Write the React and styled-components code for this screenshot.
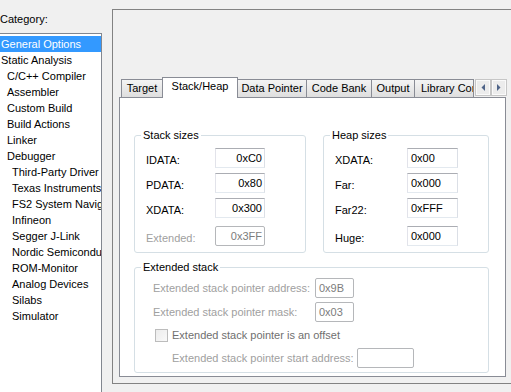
import React from 'react';
import styled, { createGlobalStyle } from 'styled-components';

const Global = createGlobalStyle`
  html, body { margin: 0; padding: 0; background: #f0f0f0; }
  body {
    font-family: "Liberation Sans", Arial, sans-serif;
    font-size: 11px;
    color: #000;
  }
  #root { width: 511px; height: 392px; overflow: hidden; }
`;

const Page = styled.div`
  display: flex;
  height: 392px;
  overflow: hidden;
`;

const Sidebar = styled.div`
  width: 102px;
  flex: none;
  display: flex;
  flex-direction: column;
  padding-top: 12px;
  box-sizing: border-box;
`;

const Caption = styled.div`
  line-height: 14px;
  height: 14px;
  margin-bottom: 7px;
`;

const List = styled.div`
  flex: 1;
  background: #fff;
  border: 1px solid #828790;
  border-bottom: none;
  margin-left: -1px;
  padding-top: 2px;
  overflow: hidden;
`;

const Item = styled.div`
  height: 16px;
  line-height: 16px;
  padding-left: ${p => [1, 7, 12][p.$level]}px;
  white-space: nowrap;
  overflow: hidden;
  background: ${p => (p.$selected ? '#3399ff' : 'transparent')};
  color: ${p => (p.$selected ? '#fff' : '#000')};
`;

const Main = styled.div`
  flex: 1;
  display: flex;
  padding: 9px 2px 8px 10px;
  box-sizing: border-box;
`;

const Frame = styled.div`
  flex: 1;
  border: 1px solid #828282;
  display: flex;
  flex-direction: column;
  justify-content: flex-end;
  padding: 0 5px 6px 6px;
`;

const Strip = styled.div`
  display: flex;
  height: 21px;
  margin-bottom: -1px;
  margin-right: -1px;
  position: relative;
  z-index: 1;
`;

const TabList = styled.div`
  flex: 1;
  display: flex;
  align-items: flex-end;
  overflow: hidden;
  padding-left: 2px;
  height: 21px;
`;

const Tab = styled.div`
  flex: none;
  box-sizing: border-box;
  width: ${p => p.$w}px;
  height: ${p => (p.$selected ? 21 : 18)}px;
  margin-left: ${p => (p.$first ? 0 : -1)}px;
  margin-bottom: ${p => (p.$selected ? 0 : 1)}px;
  border: 1px solid #898c95;
  border-bottom: none;
  background: ${p => (p.$selected ? '#fff' : 'linear-gradient(#f4f4f4, #e9e9e9 50%, #dedede)')};
  position: relative;
  z-index: ${p => (p.$selected ? 2 : 1)};
  display: flex;
  align-items: center;
  justify-content: ${p => (p.$clip ? 'flex-start' : 'center')};
  padding-left: ${p => (p.$clip ? 6 : 0)}px;
  padding-bottom: ${p => (p.$selected ? 3 : 0)}px;
  overflow: hidden;
  white-space: nowrap;
  line-height: 13px;
`;

const Scrollers = styled.div`
  display: flex;
  margin-top: 2px;
  height: 17px;
  margin-left: 1px;
`;

const ScrollBtn = styled.div`
  width: 16px;
  height: 17px;
  box-sizing: border-box;
  border: 1px solid #c6c6c6;
  box-shadow: inset 0 0 0 1px #fafafa;
  background: #ececec;
  display: flex;
  align-items: center;
  justify-content: center;
`;

const Panel = styled.div`
  background: #fff;
  border: 1px solid #898c95;
  padding: 37px 12px 3px 14px;
  display: grid;
  grid-template-columns: 172px 166px;
  column-gap: 17px;
  row-gap: 14px;
`;

const Group = styled.div`
  position: relative;
  border: 1px solid #d5dfe5;
  border-radius: 3px;
  box-sizing: border-box;
  padding: ${p => p.$pad};
  grid-column: ${p => (p.$wide ? '1 / 3' : 'auto')};
`;

const Legend = styled.div`
  position: absolute;
  top: -7px;
  left: 6px;
  padding: 0 2px;
  background: #fff;
  line-height: 13px;
`;

const Field = styled.div`
  display: flex;
  align-items: center;
  height: 20px;
  margin-top: ${p => p.$mt || 0}px;
`;

const Label = styled.div`
  flex: none;
  width: ${p => p.$w}px;
  margin-left: ${p => p.$ml || 0}px;
  padding-top: ${p => (p.$low ? 4 : 0)}px;
  line-height: 13px;
  white-space: nowrap;
  color: ${p => (p.$disabled ? '#a0a0a0' : '#000')};
`;

const TextBox = styled.div`
  flex: none;
  box-sizing: border-box;
  width: ${p => p.$w}px;
  height: 20px;
  line-height: 18px;
  padding: 0 2px 0 3px;
  border: 1px solid;
  border-color: ${p => (p.$disabled ? '#b5b7ba' : '#abadb3 #dbdfe6 #e3e9ef #e2e3ea')};
  border-radius: ${p => (p.$disabled ? 2 : 0)}px;
  text-align: ${p => p.$align || 'left'};
  color: ${p => (p.$disabled ? '#7c7c7c' : '#000')};
  background: #fff;
`;

const Check = styled.div`
  flex: none;
  box-sizing: border-box;
  width: 13px;
  height: 13px;
  margin-left: 20px;
  border: 1px solid #bcbcbc;
  background: linear-gradient(135deg, #ececec, #f9f9f9);
`;

const CheckLabel = styled.div`
  margin-left: 4px;
  color: #6f6f6f;
  white-space: nowrap;
  line-height: 13px;
`;

const Arrow = ({ dir }) => (
  <svg width="4" height="7" viewBox="0 0 4 7">
    {dir === 'left' ? (
      <polygon points="4,0 4,7 0.5,3.5" fill="#4f6488" />
    ) : (
      <polygon points="0,0 0,7 3.5,3.5" fill="#4f6488" />
    )}
  </svg>
);

const categories = [
  ['General Options', 0, true],
  ['Static Analysis', 0],
  ['C/C++ Compiler', 1],
  ['Assembler', 1],
  ['Custom Build', 1],
  ['Build Actions', 1],
  ['Linker', 1],
  ['Debugger', 1],
  ['Third-Party Driver', 2],
  ['Texas Instruments', 2],
  ['FS2 System Navigator', 2],
  ['Infineon', 2],
  ['Segger J-Link', 2],
  ['Nordic Semiconductor', 2],
  ['ROM-Monitor', 2],
  ['Analog Devices', 2],
  ['Silabs', 2],
  ['Simulator', 2],
];

const tabs = [
  ['Target', 42],
  ['Stack/Heap', 76, true],
  ['Data Pointer', 70],
  ['Code Bank', 66],
  ['Output', 44],
  ['Library Configuration', 60, false, true],
];

const stackRows = [
  ['IDATA:', '0xC0', 0],
  ['PDATA:', '0x80', 5],
  ['XDATA:', '0x300', 5],
  ['Extended:', '0x3FF', 8, true],
];

const heapRows = [
  ['XDATA:', '0x00', 0],
  ['Far:', '0x000', 5],
  ['Far22:', '0xFFF', 5],
  ['Huge:', '0x000', 8],
];

export default function App() {
  return (
    <>
      <Global />
      <Page>
        <Sidebar>
          <Caption>Category:</Caption>
          <List>
            {categories.map(([name, level, sel]) => (
              <Item key={name} $level={level} $selected={sel}>
                {name}
              </Item>
            ))}
          </List>
        </Sidebar>
        <Main>
          <Frame>
            <Strip>
              <TabList>
                {tabs.map(([name, w, sel, clip], i) => (
                  <Tab key={name} $w={w} $selected={sel} $clip={clip} $first={i === 0}>
                    {name}
                  </Tab>
                ))}
              </TabList>
              <Scrollers>
                <ScrollBtn><Arrow dir="left" /></ScrollBtn>
                <ScrollBtn><Arrow dir="right" /></ScrollBtn>
              </Scrollers>
            </Strip>
            <Panel>
              <Group $pad="12px 0 6px 0">
                <Legend>Stack sizes</Legend>
                {stackRows.map(([l, v, mt, dis]) => (
                  <Field key={l} $mt={mt}>
                    <Label $w={69} $ml={11} $low $disabled={dis}>{l}</Label>
                    <TextBox $w={50} $align="right" $disabled={dis}>{v}</TextBox>
                  </Field>
                ))}
              </Group>
              <Group $pad="12px 0 6px 0">
                <Legend>Heap sizes</Legend>
                {heapRows.map(([l, v, mt]) => (
                  <Field key={l} $mt={mt}>
                    <Label $w={72} $ml={11} $low>{l}</Label>
                    <TextBox $w={51}>{v}</TextBox>
                  </Field>
                ))}
              </Group>
              <Group $wide $pad="10px 0 4px 0">
                <Legend>Extended stack</Legend>
                <Field>
                  <Label $w={162} $ml={18} $disabled>Extended stack pointer address:</Label>
                  <TextBox $w={39} $disabled>0x9B</TextBox>
                </Field>
                <Field $mt={4}>
                  <Label $w={162} $ml={18} $disabled>Extended stack pointer mask:</Label>
                  <TextBox $w={39} $disabled>0x03</TextBox>
                </Field>
                <Field $mt={3}>
                  <Check />
                  <CheckLabel>Extended stack pointer is an offset</CheckLabel>
                </Field>
                <Field $mt={3}>
                  <Label $w={185} $ml={37} $disabled>Extended stack pointer start address:</Label>
                  <TextBox $w={57} $disabled />
                </Field>
              </Group>
            </Panel>
          </Frame>
        </Main>
      </Page>
    </>
  );
}
